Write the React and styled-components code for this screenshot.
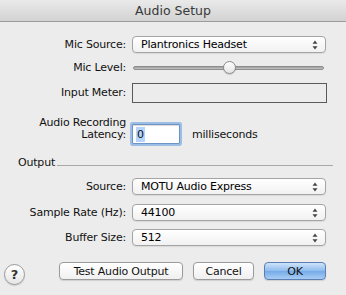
import React from 'react';
import styled, { createGlobalStyle } from 'styled-components';

const GlobalStyle = createGlobalStyle`
  html, body {
    margin: 0;
    padding: 0;
    background: #ececec;
  }
  * {
    box-sizing: border-box;
  }
`;

const Window = styled.div`
  width: 346px;
  height: 295px;
  overflow: hidden;
  background: #ececec;
  font-family: "DejaVu Sans", "Liberation Sans", sans-serif;
  font-size: 11px;
  letter-spacing: -0.2px;
  color: #111;
`;

const TitleBar = styled.div`
  height: 22px;
  line-height: 21px;
  text-align: center;
  font-size: 12.5px;
  letter-spacing: 0;
  color: #383838;
  background: linear-gradient(#eaeaea, #d2d2d2);
  border-bottom: 1px solid #9c9c9c;
`;

const Body = styled.div`
  display: flex;
  flex-direction: column;
  padding-top: 14px;
`;

const Row = styled.div`
  display: flex;
  align-items: ${p => (p.$bottom ? 'flex-end' : 'center')};
  height: ${p => p.$h}px;
  margin-top: ${p => p.$gap || 0}px;
`;

const Label = styled.div`
  width: 126px;
  margin-right: 6px;
  text-align: right;
  line-height: 12px;
  padding-bottom: ${p => p.$pb || 0}px;
`;

const Popup = styled.div`
  position: relative;
  width: 194px;
  height: 17px;
  display: flex;
  align-items: center;
  padding-left: 8px;
  border: 1px solid #a4a4a4;
  border-radius: 4px;
  background: linear-gradient(#ffffff, #f1f1f1);
  box-shadow: 0 1px 1px rgba(0, 0, 0, 0.08);
  color: #000;
`;

const Arrows = styled.svg`
  position: absolute;
  right: 7px;
  top: 3px;
`;

const SliderTrack = styled.div`
  position: relative;
  width: 191px;
  height: 4px;
  margin-left: 1px;
  border-radius: 2px;
  background: linear-gradient(#9a9a9a, #c8c8c8);
  border: 1px solid #8e8e8e;
`;

const Knob = styled.div`
  position: absolute;
  top: -6px;
  width: 13px;
  height: 13px;
  border-radius: 50%;
  border: 1px solid #8a8a8a;
  background: linear-gradient(#ffffff, #e4e4e4);
  box-shadow: 0 1px 1px rgba(0, 0, 0, 0.15);
`;

const Meter = styled.div`
  width: 195px;
  height: 20px;
  border: 1px solid #5a5a5a;
  background: #ececec;
`;

const LatencyGroup = styled.div`
  display: flex;
  align-items: center;
  height: 20px;
`;

const NumberField = styled.div`
  width: 48px;
  height: 20px;
  display: flex;
  align-items: center;
  padding-left: 3px;
  background: #fff;
  border: 1px solid #6f94c4;
  box-shadow: 0 0 0 2px #9cbde5, inset 0 1px 1px rgba(0, 0, 0, 0.15);
  border-radius: 1px;
`;

const Selected = styled.span`
  background: #b5d5ff;
  padding: 1px 1px;
`;

const Unit = styled.span`
  margin-left: 12px;
`;

const SectionHeader = styled.div`
  display: flex;
  align-items: flex-end;
  height: 12px;
  line-height: 12px;
  margin-top: 13px;
  padding-left: 18px;
  padding-right: 13px;
`;

const Rule = styled.div`
  flex: 1;
  height: 1px;
  margin-left: 2px;
  margin-bottom: 3px;
  background: #a8a8a8;
`;

const Footer = styled.div`
  display: flex;
  align-items: flex-start;
  margin-top: 16px;
  padding-left: 4px;
  padding-right: 20px;
`;

const HelpButton = styled.div`
  width: 21px;
  height: 21px;
  margin-top: 2px;
  border-radius: 50%;
  border: 1px solid #9a9a9a;
  background: linear-gradient(#ffffff, #e6e6e6);
  box-shadow: 0 1px 1px rgba(0, 0, 0, 0.15);
  display: flex;
  align-items: center;
  justify-content: center;
  font-weight: bold;
  font-size: 13px;
  color: #333;
`;

const Buttons = styled.div`
  display: flex;
  margin-left: auto;
  gap: 10px;
`;

const Button = styled.div`
  width: ${p => p.$w}px;
  height: 18px;
  display: flex;
  align-items: center;
  justify-content: center;
  border-radius: 4px;
  border: 1px solid ${p => (p.$primary ? '#5b7fb3' : '#9b9b9b')};
  background: ${p =>
    p.$primary
      ? 'linear-gradient(#cfe3f9, #8dbbee 50%, #74aae8 51%, #a9cdf3)'
      : 'linear-gradient(#ffffff, #f0f0f0)'};
  box-shadow: 0 1px 1px rgba(0, 0, 0, 0.12);
  color: #111;
`;

const PopupArrows = () => (
  <Arrows width="6" height="10" viewBox="0 0 6 10">
    <path d="M3 0.5 L5.5 3.8 L0.5 3.8 Z" fill="#444" />
    <path d="M3 9.5 L5.5 6.2 L0.5 6.2 Z" fill="#444" />
  </Arrows>
);

const Select = ({ value }) => (
  <Popup>
    {value}
    <PopupArrows />
  </Popup>
);

export default function App() {
  const level = 0.5;
  return (
    <>
      <GlobalStyle />
      <Window>
        <TitleBar>Audio Setup</TitleBar>
        <Body>
          <Row $h={17}>
            <Label>Mic Source:</Label>
            <Select value="Plantronics Headset" />
          </Row>
          <Row $h={14} $gap={8}>
            <Label>Mic Level:</Label>
            <SliderTrack>
              <Knob style={{ left: `${level * 191 - 7}px` }} />
            </SliderTrack>
          </Row>
          <Row $h={20} $gap={8}>
            <Label>Input Meter:</Label>
            <Meter />
          </Row>
          <Row $h={27} $gap={14} $bottom>
            <Label $pb={3}>
              Audio Recording
              <br />
              Latency:
            </Label>
            <LatencyGroup>
              <NumberField>
                <Selected>0</Selected>
              </NumberField>
              <Unit>milliseconds</Unit>
            </LatencyGroup>
          </Row>
          <SectionHeader>
            Output
            <Rule />
          </SectionHeader>
          <Row $h={17} $gap={9}>
            <Label>Source:</Label>
            <Select value="MOTU Audio Express" />
          </Row>
          <Row $h={17} $gap={9}>
            <Label>Sample Rate (Hz):</Label>
            <Select value="44100" />
          </Row>
          <Row $h={17} $gap={8}>
            <Label>Buffer Size:</Label>
            <Select value="512" />
          </Row>
          <Footer>
            <HelpButton>?</HelpButton>
            <Buttons>
              <Button $w={124}>Test Audio Output</Button>
              <Button $w={61}>Cancel</Button>
              <Button $w={62} $primary>OK</Button>
            </Buttons>
          </Footer>
        </Body>
      </Window>
    </>
  );
}
